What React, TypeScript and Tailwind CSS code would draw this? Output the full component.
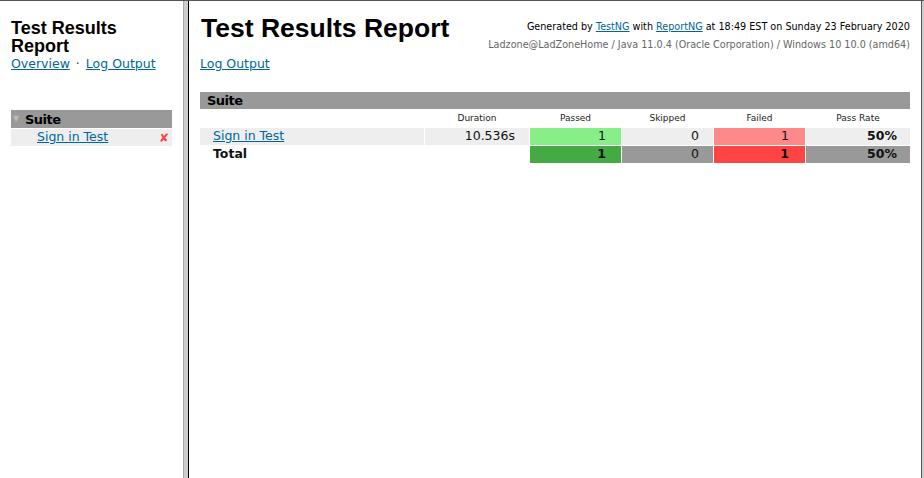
import React from 'react';

const body = { fontFamily: '"DejaVu Sans", "Open Sans", sans-serif' };
const head = { fontFamily: '"Liberation Sans", Arial, sans-serif' };

const cols = ['Duration', 'Passed', 'Skipped', 'Failed', 'Pass Rate'];

function LeftFrame() {
  return (
    <div className="w-[183px] h-full px-[11px] pt-[18px]">
      <h1 style={head} className="text-[18px] leading-[18px] font-bold text-black">
        Test Results Report
      </h1>
      <div className="mt-px text-[12.5px] leading-[15px] flex gap-[6px] items-center">
        <a href="#" className="text-[#006699] underline">Overview</a>
        <span className="text-[#333]">·</span>
        <a href="#" className="text-[#006699] underline">Log Output</a>
      </div>

      <div className="mt-[39px] flex flex-col gap-px">
        <div className="h-[18px] bg-[#999999] flex items-center">
          <span className="text-[8px] text-[#bbbbbb] ml-[2px] w-[12px]">▼</span>
          <span className="text-[13px] font-bold text-black leading-none tracking-[-0.5px]">Suite</span>
        </div>
        <div className="h-[17px] bg-[#eeeeee] flex items-center justify-between pl-[26px] pr-[3px]">
          <a href="#" className="text-[12.5px] text-[#006699] underline leading-none">Sign in Test</a>
          <span className="text-[12px] font-bold text-[#ff4444] leading-none">✘</span>
        </div>
      </div>
    </div>
  );
}

function RightFrame() {
  return (
    <div className="flex-1 h-full px-[11px] pt-[12px]">
      <div className="flex justify-between items-start">
        <h1 style={head} className="mt-[2px] text-[26.5px] leading-[27px] font-bold text-black pl-px">
          Test Results Report
        </h1>
        <div className="pt-[5px] text-right text-[9.65px] leading-[18px]">
          <div className="text-black">
            Generated by <a href="#" className="text-[#006699] underline">TestNG</a> with{' '}
            <a href="#" className="text-[#006699] underline">ReportNG</a> at 18:49 EST on Sunday 23 February 2020
          </div>
          <div className="text-[#666666]">
            Ladzone@LadZoneHome / Java 11.0.4 (Oracle Corporation) / Windows 10 10.0 (amd64)
          </div>
        </div>
      </div>
      <div className="mt-[2px] text-[12.5px] leading-[15px]">
        <a href="#" className="text-[#006699] underline">Log Output</a>
      </div>

      <div className="mt-[21px] h-[17px] bg-[#999999] flex items-center pl-[7px]">
        <span className="text-[13px] font-bold text-black leading-none tracking-[-0.5px]">Suite</span>
      </div>

      <div className="mt-px grid grid-cols-[224px_104px_91px_91px_91px_104px] gap-px auto-rows-[17px] text-[12.5px] text-[#111]">
        <div />
        {cols.map((c) => (
          <div key={c} className="flex items-center justify-center text-[9px] text-[#222]">
            {c}
          </div>
        ))}

        <div className="bg-[#eeeeee] flex items-center pl-[13px]">
          <a href="#" className="text-[#006699] underline leading-none">Sign in Test</a>
        </div>
        <div className="bg-[#eeeeee] flex items-center justify-end pr-[14px]">10.536s</div>
        <div className="bg-[#88ee88] flex items-center justify-end pr-[15px]">1</div>
        <div className="bg-[#eeeeee] flex items-center justify-end pr-[14px]">0</div>
        <div className="bg-[#ff8888] flex items-center justify-end pr-[16px]">1</div>
        <div className="bg-[#eeeeee] flex items-center justify-end pr-[13px] font-bold">50%</div>

        <div className="flex items-center pl-[13px] font-bold">Total</div>
        <div />
        <div className="bg-[#44aa44] flex items-center justify-end pr-[15px] font-bold">1</div>
        <div className="bg-[#999999] flex items-center justify-end pr-[14px]">0</div>
        <div className="bg-[#ff4444] flex items-center justify-end pr-[16px] font-bold">1</div>
        <div className="bg-[#999999] flex items-center justify-end pr-[13px] font-bold">50%</div>
      </div>
    </div>
  );
}

export default function App() {
  return (
    <div style={body} className="w-[924px] h-[478px] bg-white border-t border-[#555555] flex overflow-hidden text-black">
      <LeftFrame />
      <div className="w-px h-full bg-[#aaaaaa]" />
      <div className="w-[4px] h-full bg-[#cccccc]" />
      <div className="w-px h-full bg-black" />
      <RightFrame />
      <div className="w-px h-full bg-[#555555]" />
      <div className="w-[2px] h-full bg-[#cccccc]" />
    </div>
  );
}
